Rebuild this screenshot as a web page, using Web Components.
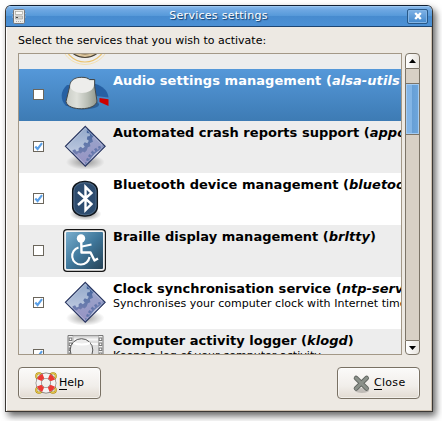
<!DOCTYPE html>
<html lang="en"><head><meta charset="utf-8"><title>Services settings</title>
<style>
html,body{margin:0;background:#fff;height:421px;overflow:hidden}
body{font:11px/14px "DejaVu Sans",sans-serif;color:#000;padding:5px 0 0 5px;box-sizing:border-box}
</style></head><body>
<settings-window></settings-window>
<script>
const icons = {
clock:`<g fill="none"><circle cx="24" cy="21" r="24.5" stroke="#f3dfb0" stroke-width="1"/><circle cx="24" cy="22" r="21" stroke="#ecc36c" stroke-width="1.2"/><circle cx="24" cy="19" r="19.5" fill="#d9c39b" stroke="#4a4336" stroke-width="1.2"/><circle cx="24" cy="18" r="17" fill="#f1eee4" stroke="#6b5a3c"/></g><circle cx="24" cy="32" r="1.4" fill="#444"/><circle cx="16" cy="30" r=".8" fill="#555"/><circle cx="32" cy="30" r=".8" fill="#555"/>`,
knob:`<defs><linearGradient id="k" x1="0" x2="1"><stop offset="0" stop-color="#c9ccc5"/><stop offset=".35" stop-color="#dfe1db"/><stop offset=".7" stop-color="#b9beb5"/><stop offset="1" stop-color="#8f968c"/></linearGradient></defs>
<path d="M5 35C-1 29 -1 20 6 14L12 14 12 35z" fill="#2660a3"/><path d="M33 12.500C42 15 47 20 47.500 26.500L35 25z" fill="#2660a3"/>
<ellipse cx="22" cy="33.500" rx="16" ry="5" fill="#163c6c" opacity=".5"/>
<path d="M38.500 27L47.500 28.200V35L38.500 31z" fill="#c00"/>
<path d="M9 14C9.500 9 14 6.500 20.500 6.300C24 6.200 27 7 28.500 8.500L33.700 8.500V15.500L36 30C35 40 6.500 40.500 5 30.500z" fill="url(#k)" stroke="#43484a"/>
<path d="M9.300 14.500C10 9.500 14.500 7 20.500 7C24 7 26.500 7.500 28.500 9.200L33 9.200V14C32 25 9 24 9.300 14.500z" fill="#ededeb"/>`,
gears:`<defs><linearGradient id="g" x1="0" y1="0" x2="0" y2="1"><stop offset=".1" stop-color="#3f609a"/><stop offset=".45" stop-color="#6379ab"/><stop offset="1" stop-color="#8582b6"/></linearGradient><linearGradient id="gl" x1="0" y1="0" x2="0" y2="1"><stop offset="0" stop-color="#8fa6c8"/><stop offset="1" stop-color="#bcc8df"/></linearGradient><linearGradient id="gp" x1="0" y1="0" x2="0" y2="1"><stop offset="0" stop-color="#99a4cb"/><stop offset="1" stop-color="#9791c2"/></linearGradient><clipPath id="c"><path d="M24.500 4.500L44 24 24.500 43.500 5 24z"/></clipPath><radialGradient id="gs"><stop offset="0" stop-opacity=".38"/><stop offset="1" stop-opacity="0"/></radialGradient></defs>
<g transform="translate(-.7 -1.2) scale(1.02)"><ellipse cx="24.500" cy="39.500" rx="19" ry="7.500" fill="url(#gs)"/>
<g clip-path="url(#c)"><path d="M4 4H45V45H4z" fill="url(#g)"/>
<path d="M4 4H26V11L29 11.500V14L26.500 14.500 26 17 28 18.500 26.500 21 24 20 22.500 22 24 24.500 22 26 20 24.500 18 26 18 28.500 16 29 14.500 27 12 28V30H4z" fill="url(#gl)"/>
<path d="M12 32L16 32 18 30 20 31 22 29 24 30 26 28 27 25 29.500 24 29 21 32 19.500 31 16 34 13 46 25 26 46z" fill="url(#gp)"/>
<circle cx="48" cy="46" r="23" fill="none" stroke="#6477ab" stroke-width="2.500" stroke-dasharray="2.500 1.700"/><circle cx="48" cy="46" r="22" fill="#6b7db0"/><circle cx="48" cy="46" r="20.500" fill="#b9bddc"/><circle cx="48" cy="46" r="15" fill="#c8c9e2"/></g><path d="M24.500 4.500L44 24 24.500 43.500 5 24z" fill="none" stroke="#2b3760" stroke-width="1.100"/><path d="M24.500 6.200L42.300 24 24.500 41.800 6.700 24z" fill="none" stroke="#cbd3e5" stroke-opacity=".6" stroke-width=".8"/></g>`,
bluetooth:`<defs><radialGradient id="bs"><stop offset="0" stop-opacity=".55"/><stop offset="1" stop-opacity="0"/></radialGradient></defs><ellipse cx="24.500" cy="39" rx="16" ry="6.500" fill="url(#bs)"/><rect x="11.700" y="6.500" width="24.600" height="34.500" rx="11.500" ry="9" fill="#2d4c6f" stroke="#10161c" stroke-width="1.500"/><rect x="13" y="7.800" width="22" height="32" rx="10" ry="8" fill="none" stroke="#58728d" stroke-width=".8"/><path d="M17 17L30.500 29 24.500 35V12L30.500 18 17 30" fill="none" stroke="#fff" stroke-width="2.400" stroke-linejoin="miter"/>`,
wheelchair:`<defs><linearGradient id="w" x1="0" y1="0" x2="1" y2="1"><stop offset="0" stop-color="#79aece"/><stop offset=".5" stop-color="#3f779b"/><stop offset="1" stop-color="#264357"/></linearGradient></defs><rect x="2" y="2" width="43" height="43" rx="4" fill="#151515"/><rect x="3.200" y="3.200" width="40.600" height="40.600" rx="3" fill="#f3f3f3"/><rect x="5" y="5" width="37" height="37" rx="1" fill="url(#w)"/><circle cx="20" cy="11.500" r="4.200" fill="#fff"/><g fill="none" stroke="#fff"><path d="M20.200 13L20.500 25.500H29.500L33.500 33.500 37 31.500" stroke-width="2.400" stroke-linejoin="round"/><path d="M21 19.500L30.500 17.500" stroke-width="1.800"/><path d="M17.500 20.500A8.700 8.700 0 1 0 28.500 30" stroke-width="2.100"/></g>`,
film:`<path d="M7 4.500H42V47H7z" fill="#efefef" stroke="#777"/><path d="M12 5H37.500V48H12z" fill="#dedede" stroke="#bbb"/><path d="M9.500 6.500V48M39.500 6.500V48" stroke="#777" stroke-width="3.600" stroke-dasharray="3.600 1.400"/><path d="M9.500 7.500V48M39.500 7.500V48" stroke="#fff" stroke-width="1.600" stroke-dasharray="1.600 3.400"/><path d="M13 8.500H37M13 13H37" stroke="#f7f7f7" stroke-width="2"/><circle cx="20.500" cy="19" r="11.300" fill="#ececec" stroke="#555"/><path d="M12.500 12C17 14 25 14 29 12" stroke="#fff" stroke-width="2" fill="none"/>`,
help:`<g fill="none"><g stroke="#b08a10" stroke-width="2"><circle cx="4" cy="4" r="2.800"/><circle cx="18" cy="4" r="2.800"/><circle cx="4" cy="18" r="2.800"/><circle cx="18" cy="18" r="2.800"/></g><g stroke="#f4dc5c" stroke-width=".8"><circle cx="4" cy="4" r="2.800"/><circle cx="18" cy="4" r="2.800"/><circle cx="4" cy="18" r="2.800"/><circle cx="18" cy="18" r="2.800"/></g><circle cx="11" cy="11" r="7.300" stroke="#77706c" stroke-width="6.200"/><circle cx="11" cy="11" r="7.300" stroke="#f3f3f3" stroke-width="5"/><circle cx="11" cy="11" r="7.300" stroke="#ec3a34" stroke-width="5" stroke-dasharray="5.730 5.740" stroke-dashoffset="-2.870"/></g>`,
cross:`<ellipse cx="9" cy="15.500" rx="7" ry="2.500" fill="#000" opacity=".18"/><path d="M3 3L13.700 13.500M13.700 3L3 13.500" stroke="#606560" stroke-width="4.600" stroke-linecap="round"/><path d="M3 3L13.700 13.500M13.700 3L3 13.500" stroke="#8b918a" stroke-width="3" stroke-linecap="round"/>`,
app:`<path d="M0 4.500H14M0 8H14" stroke="#9db7d3"/><rect x="1.500" y=".5" width="11" height="14" rx="1.200" fill="#ececea" stroke="#77777a"/><rect x="3.500" y="2.500" width="7" height="3" fill="#fafafa" stroke="#a5a5a0" stroke-width=".7"/><path d="M3.500 7H10.500V10H3.500z" fill="#d5d5d1" stroke="#999" stroke-width=".6"/><path d="M4 8.500H6" stroke="#444" stroke-width="1.200"/><path d="M4 12.500H10.500" stroke="#aaa" stroke-dasharray="1 1"/>`
};
const define = (name, render) => customElements.define(name, class extends HTMLElement {
  connectedCallback(){ if(!this.shadowRoot) this.attachShadow({mode:'open'}).innerHTML = render(this); }
});

define('app-icon', el => { const s=+el.getAttribute('size');
  return `<style>:host{display:block;flex:none;width:${s}px;height:${s}px}svg{display:block;overflow:visible}</style><svg width="${s}" height="${s}" viewBox="0 0 ${s} ${s}">${icons[el.getAttribute('name')]}</svg>`; });

define('check-box', el => `<style>:host{display:block;flex:none;box-sizing:border-box;width:11px;height:11px;border:1px solid #6b665c;background:#fff}svg{display:block}</style><svg width="9" height="9">${el.hasAttribute('checked')?'<path d="M1.300 4.500L3.600 7L8 1.200" fill="none" stroke="#5a9fe6" stroke-width="2.100"/>':''}</svg>`);

define('service-row', () => `<style>
:host{display:flex;flex:none;height:52px;align-items:center;padding-left:14px;box-sizing:border-box;background:#fff;white-space:nowrap}
:host([odd]){background:#ededed}
:host([selected]){background:linear-gradient(#5598d9,#3d7bb4);color:#fff}
slot[name=check]::slotted(*){margin:0 17px 1px 0}
div{align-self:flex-start;margin-left:4px;padding-top:4px}
.t{display:block;font-weight:bold;font-size:13px;line-height:15px;height:16px;letter-spacing:var(--title-ls,.02px)}
.d{display:block;font-size:11px;line-height:14px;letter-spacing:.04px}
</style><slot name="check"></slot><slot name="icon"></slot><div><span class="t"><slot></slot></span><span class="d"><slot name="note"></slot></span></div>`);

define('service-list', () => `<style>
:host{display:flex;flex-direction:column;justify-content:flex-start;box-sizing:border-box;width:384px;height:302px;border:1px solid #a39887;overflow:hidden;background:#fff}
.in{display:flex;flex-direction:column;margin-top:-37px}
</style><div class="in"><slot></slot></div>`);

define('scroll-bar', () => `<style>
:host{display:flex;flex-direction:column;width:15px;height:302px;box-sizing:border-box}
.b{height:16px;flex:none;box-sizing:border-box;border:1px solid #7c7467;background:linear-gradient(90deg,#fff,#e8e4de);display:flex;align-items:center;justify-content:center}
.u{border-radius:4px 4px 0 0}.d{border-radius:0 0 4px 4px;height:15px}
.tr{flex:1;border:solid #7c7467;border-width:0 1px;background:#d8d0c5;padding-top:14px}
.th{height:52px;margin:0;box-sizing:border-box;border:solid #7c7467;border-width:1px 0;background:linear-gradient(90deg,#83b5e6 45%,#679fd6 48%,#6ea6dc);box-shadow:inset 0 0 0 1px #a4cbf2}
svg{display:block}
</style><div class="b u"><svg width="7" height="4"><path d="M0 4L3.500 0 7 4z"/></svg></div><div class="tr"><div class="th"></div></div><div class="b d"><svg width="7" height="4"><path d="M0 0L3.500 4 7 0z"/></svg></div>`);

define('push-button', () => `<style>
:host{display:flex;box-sizing:border-box;width:83px;height:32px;border:1px solid #797164;border-radius:4px;background:linear-gradient(#fbfaf9,#f1eeea 60%,#e2dbd2);box-shadow:inset 0 0 0 1px #fff8;align-items:center;padding-left:var(--pad,16px);gap:var(--gap,2px)}
</style><slot></slot>`);

define('title-bar', () => `<style>
:host{display:flex;height:20px;align-items:center;justify-content:space-between;padding:0 4px 0 6px;border-bottom:1px solid #1d4673;background:linear-gradient(#8abaec 0,#6da7e2 20%,#579ada 48%,#478bcf 52%,#4b90d5);color:#fff;box-shadow:inset 0 1px #9bc7f1}
.x{width:21px;height:15px;box-sizing:border-box;border:1px solid #285887;border-radius:2px;display:flex;align-items:center;justify-content:center;background:linear-gradient(#7fb2e6,#4388cc);box-shadow:inset 0 0 0 1px #82b4e5}
.n{text-shadow:1px 1px 1px #123b66;margin-left:3px;letter-spacing:.27px}
svg{display:block}
</style><app-icon name="app" size="15"></app-icon><span class="n"><slot></slot></span><div class="x"><svg width="8" height="8"><path d="M1.200 1L6.800 7M6.800 1L1.200 7" stroke="#fff" stroke-width="2.300"/></svg></div>`);

define('settings-window', () => `<style>
:host{display:block;box-sizing:border-box;width:428px;height:407px;border:1px solid #3b3835;border-top-color:#101f33;border-radius:6px 6px 0 0;background:#ede9e3;box-shadow:3px 4px 7px #0009;overflow:hidden}
.body{padding:7px 12px 0;box-sizing:border-box;box-shadow:inset 1px 0 #fff,inset -1px -1px #cdbfae;height:384px}
.l{height:19px}
.lists{display:flex;gap:3px}
.btns{display:flex;justify-content:space-between;margin-top:12px}
i{font-style:oblique}
u{text-decoration:none;box-shadow:0 1px #000}
</style><title-bar>Services settings</title-bar>
<div class="body"><div class="l">Select the services that you wish to activate:</div>
<div class="lists"><service-list>
<service-row odd><check-box slot="check"></check-box><app-icon slot="icon" name="clock" size="48"></app-icon></service-row>
<service-row selected style="--title-ls:.05px"><check-box slot="check"></check-box><app-icon slot="icon" name="knob" size="48"></app-icon>Audio settings management (<i>alsa-utils</i>)</service-row>
<service-row odd><check-box slot="check" checked></check-box><app-icon slot="icon" name="gears" size="48"></app-icon>Automated crash reports support (<i>apport</i>)</service-row>
<service-row><check-box slot="check" checked></check-box><app-icon slot="icon" name="bluetooth" size="48"></app-icon>Bluetooth device management (<i>bluetooth</i>)</service-row>
<service-row odd><check-box slot="check"></check-box><app-icon slot="icon" name="wheelchair" size="48"></app-icon>Braille display management (<i>brltty</i>)</service-row>
<service-row><check-box slot="check" checked></check-box><app-icon slot="icon" name="gears" size="48"></app-icon>Clock synchronisation service (<i>ntp-server</i>)<span slot="note">Synchronises your computer clock with Internet time servers</span></service-row>
<service-row odd><check-box slot="check" checked></check-box><app-icon slot="icon" name="film" size="48"></app-icon>Computer activity logger (<i>klogd</i>)<span slot="note">Keeps a log of your computer activity.</span></service-row>
</service-list><scroll-bar></scroll-bar></div>
<div class="btns"><push-button><app-icon name="help" size="22"></app-icon><span><u>H</u>elp</span></push-button>
<push-button style="--pad:15px;--gap:4px;letter-spacing:.3px"><app-icon name="cross" size="17"></app-icon><span><u>C</u>lose</span></push-button></div></div>`);
</script></body></html>
